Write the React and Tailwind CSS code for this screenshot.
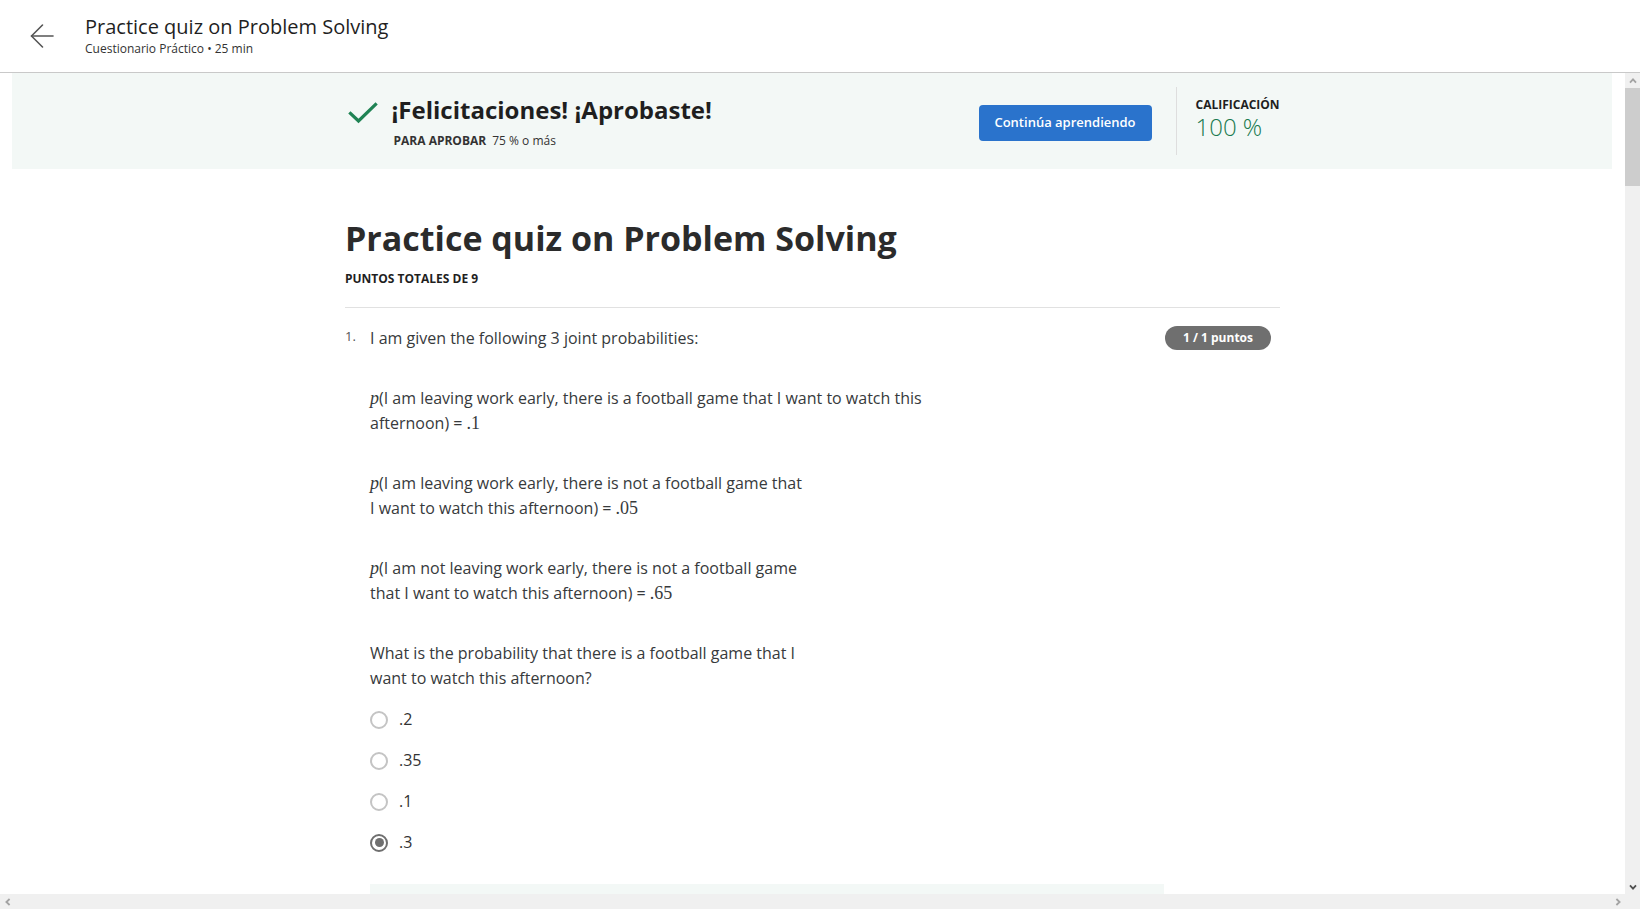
import React from "react";

function BackArrow() {
  return (
    <svg width="24" height="26" viewBox="0 0 24 26" fill="none" stroke="#555" strokeWidth="1.6" strokeLinecap="round" strokeLinejoin="round">
      <path d="M23 13 H1.5" />
      <path d="M12.5 2 L1.5 13 L12.5 24" />
    </svg>
  );
}

function Check() {
  return (
    <svg width="30" height="22" viewBox="0 0 30 22" fill="none" stroke="#1f8354" strokeWidth="3.2" strokeLinecap="square">
      <path d="M2.5 11.5 L10.5 19 L27.5 2.5" />
    </svg>
  );
}

function Chevron({ dir, color }) {
  const d = {
    up: "M0.8 4.6 L3.8 1.4 L6.8 4.6",
    down: "M0.8 1.4 L3.8 4.6 L6.8 1.4",
    left: "M4.6 0.8 L1.4 3.8 L4.6 6.8",
    right: "M1.4 0.8 L4.6 3.8 L1.4 6.8",
  }[dir];
  const vertical = dir === "up" || dir === "down";
  return (
    <svg width={vertical ? 8 : 6} height={vertical ? 6 : 8} viewBox={vertical ? "0 0 7.6 6" : "0 0 6 7.6"} fill="none" stroke={color} strokeWidth="1.8">
      <path d={d} />
    </svg>
  );
}

function MathP() {
  return <span className="font-['Liberation_Serif',serif] italic text-[18px]">p</span>;
}
function MathN({ children }) {
  return <span className="font-['Liberation_Serif',serif] text-[18px]">{children}</span>;
}

function Radio({ checked }) {
  return (
    <span
      className={
        checked
          ? "flex h-[18px] w-[18px] shrink-0 items-center justify-center rounded-full border-2 border-[#6f6f6f]"
          : "flex h-[18px] w-[18px] shrink-0 items-center justify-center rounded-full border-2 border-[#c4c4c4]"
      }
    >
      {checked ? <span className="h-[9px] w-[9px] rounded-full bg-[#6f6f6f]" /> : null}
    </span>
  );
}

export default function App() {
  const options = [
    { label: ".2", checked: false },
    { label: ".35", checked: false },
    { label: ".1", checked: false },
    { label: ".3", checked: true },
  ];
  return (
    <div className="flex h-[909px] w-[1640px] flex-col overflow-hidden bg-white font-['Open_Sans',sans-serif] text-[#373a3c]">
      {/* Header */}
      <header className="box-border flex h-[73px] shrink-0 items-center border-b border-[#c9c9c9] pl-[30px]">
        <BackArrow />
        <div className="ml-[31px] mb-[2px] flex flex-col">
          <div className="text-[20px] leading-[26px] text-[#1f1f1f]">Practice quiz on Problem Solving</div>
          <div className="mt-[1px] text-[12px] leading-[16px] text-[#333]">Cuestionario Práctico • 25 min</div>
        </div>
      </header>

      {/* Scroll area */}
      <div className="flex min-h-0 flex-1 flex-col">
        <div className="flex min-h-0 flex-1">
          <main className="min-w-0 flex-1 overflow-hidden">
            {/* Banner */}
            <section className="ml-[12px] mr-[13px] flex h-[96px] bg-[#f3f8f6]">
              <div className="mx-auto flex w-[935px] items-center justify-between">
                <div className="mt-[2px] flex items-start">
                  <div className="ml-[3px] mt-[7px]">
                    <Check />
                  </div>
                  <div className="ml-[14px] flex flex-col">
                    <div className="text-[24px] font-bold leading-[30px] text-[#1f1f1f]">¡Felicitaciones! ¡Aprobaste!</div>
                    <div className="mt-[8px] flex items-baseline text-[12px] leading-[16px] text-[#333]">
                      <span className="ml-[2px] font-bold">PARA APROBAR</span>
                      <span className="ml-[6px]">75 % o más</span>
                    </div>
                  </div>
                </div>
                <div className="flex h-full items-center">
                  <button className="mt-[4px] flex h-[36px] w-[173px] items-center justify-center rounded-[4px] bg-[#2a73cc] text-[13px] font-semibold text-white">
                    Continúa aprendiendo
                  </button>
                  <div className="ml-[24px] h-[68px] w-px bg-[#dedede]" />
                  <div className="mb-[5px] box-content flex w-[84px] flex-col pl-[19px]">
                    <div className="text-[12px] font-bold leading-[17px] text-[#1f1f1f]">CALIFICACIÓN</div>
                    <div className="text-[24px] font-light leading-[28px] text-[#1a7a4f]">100 %</div>
                  </div>
                </div>
              </div>
            </section>

            {/* Content */}
            <div className="mx-auto w-[935px]">
              <h1 className="mt-[47px] text-[34px] font-bold leading-[44px] text-[#2b2b2b]">Practice quiz on Problem Solving</h1>
              <div className="mt-[11px] text-[12px] font-bold leading-[16px] text-[#1f1f1f]">PUNTOS TOTALES DE 9</div>
              <div className="mt-[20px] h-px bg-[#e1e1e1]" />

              <div className="mt-[18px] flex items-start">
                <div className="w-[25px] text-[13px] leading-[20px] text-[#555]">1.</div>
                <div className="flex-1 text-[16px] leading-[24px]">I am given the following 3 joint probabilities:</div>
                <div className="mr-[9px] flex h-[24px] w-[106px] items-center justify-center rounded-full bg-[#6f6f6f] text-[12px] font-bold text-white">
                  1 / 1 puntos
                </div>
              </div>

              <div className="pl-[25px] text-[16px] leading-[25px]">
                <p className="mt-[36px] whitespace-nowrap">
                  <MathP />(I am leaving work early, there is a football game that I want to watch this
                  <br />
                  afternoon) = <MathN>.1</MathN>
                </p>
                <p className="mt-[35px] whitespace-nowrap">
                  <MathP />(I am leaving work early, there is not a football game that
                  <br />
                  I want to watch this afternoon) = <MathN>.05</MathN>
                </p>
                <p className="mt-[35px] whitespace-nowrap">
                  <MathP />(I am not leaving work early, there is not a football game
                  <br />
                  that I want to watch this afternoon) = <MathN>.65</MathN>
                </p>
                <p className="mt-[35px] whitespace-nowrap">
                  What is the probability that there is a football game that I
                  <br />
                  want to watch this afternoon?
                </p>

                <div className="mt-[8px] flex flex-col">
                  {options.map((o) => (
                    <label key={o.label} className="flex h-[41px] items-center">
                      <Radio checked={o.checked} />
                      <span className="ml-[11px] text-[16px] text-[#333]">{o.label}</span>
                    </label>
                  ))}
                </div>

                <div className="mt-[21px] h-[120px] w-[794px] bg-[#f3f8f6]" />
              </div>
            </div>
          </main>

          {/* Vertical scrollbar */}
          <div className="flex w-[15px] shrink-0 flex-col bg-[#f0f0f0]">
            <div className="flex h-[15px] items-center justify-center">
              <Chevron dir="up" color="#a3a3a3" />
            </div>
            <div className="h-[98px] bg-[#cdcdcd]" />
            <div className="flex-1" />
            <div className="flex h-[15px] items-center justify-center">
              <Chevron dir="down" color="#505050" />
            </div>
          </div>
        </div>

        {/* Horizontal scrollbar */}
        <div className="flex h-[15px] shrink-0 bg-[#f0f0f0]">
          <div className="flex w-[15px] items-center justify-center">
            <Chevron dir="left" color="#a3a3a3" />
          </div>
          <div className="flex-1" />
          <div className="flex w-[15px] items-center justify-center">
            <Chevron dir="right" color="#a3a3a3" />
          </div>
          <div className="w-[15px]" />
        </div>
      </div>
    </div>
  );
}
